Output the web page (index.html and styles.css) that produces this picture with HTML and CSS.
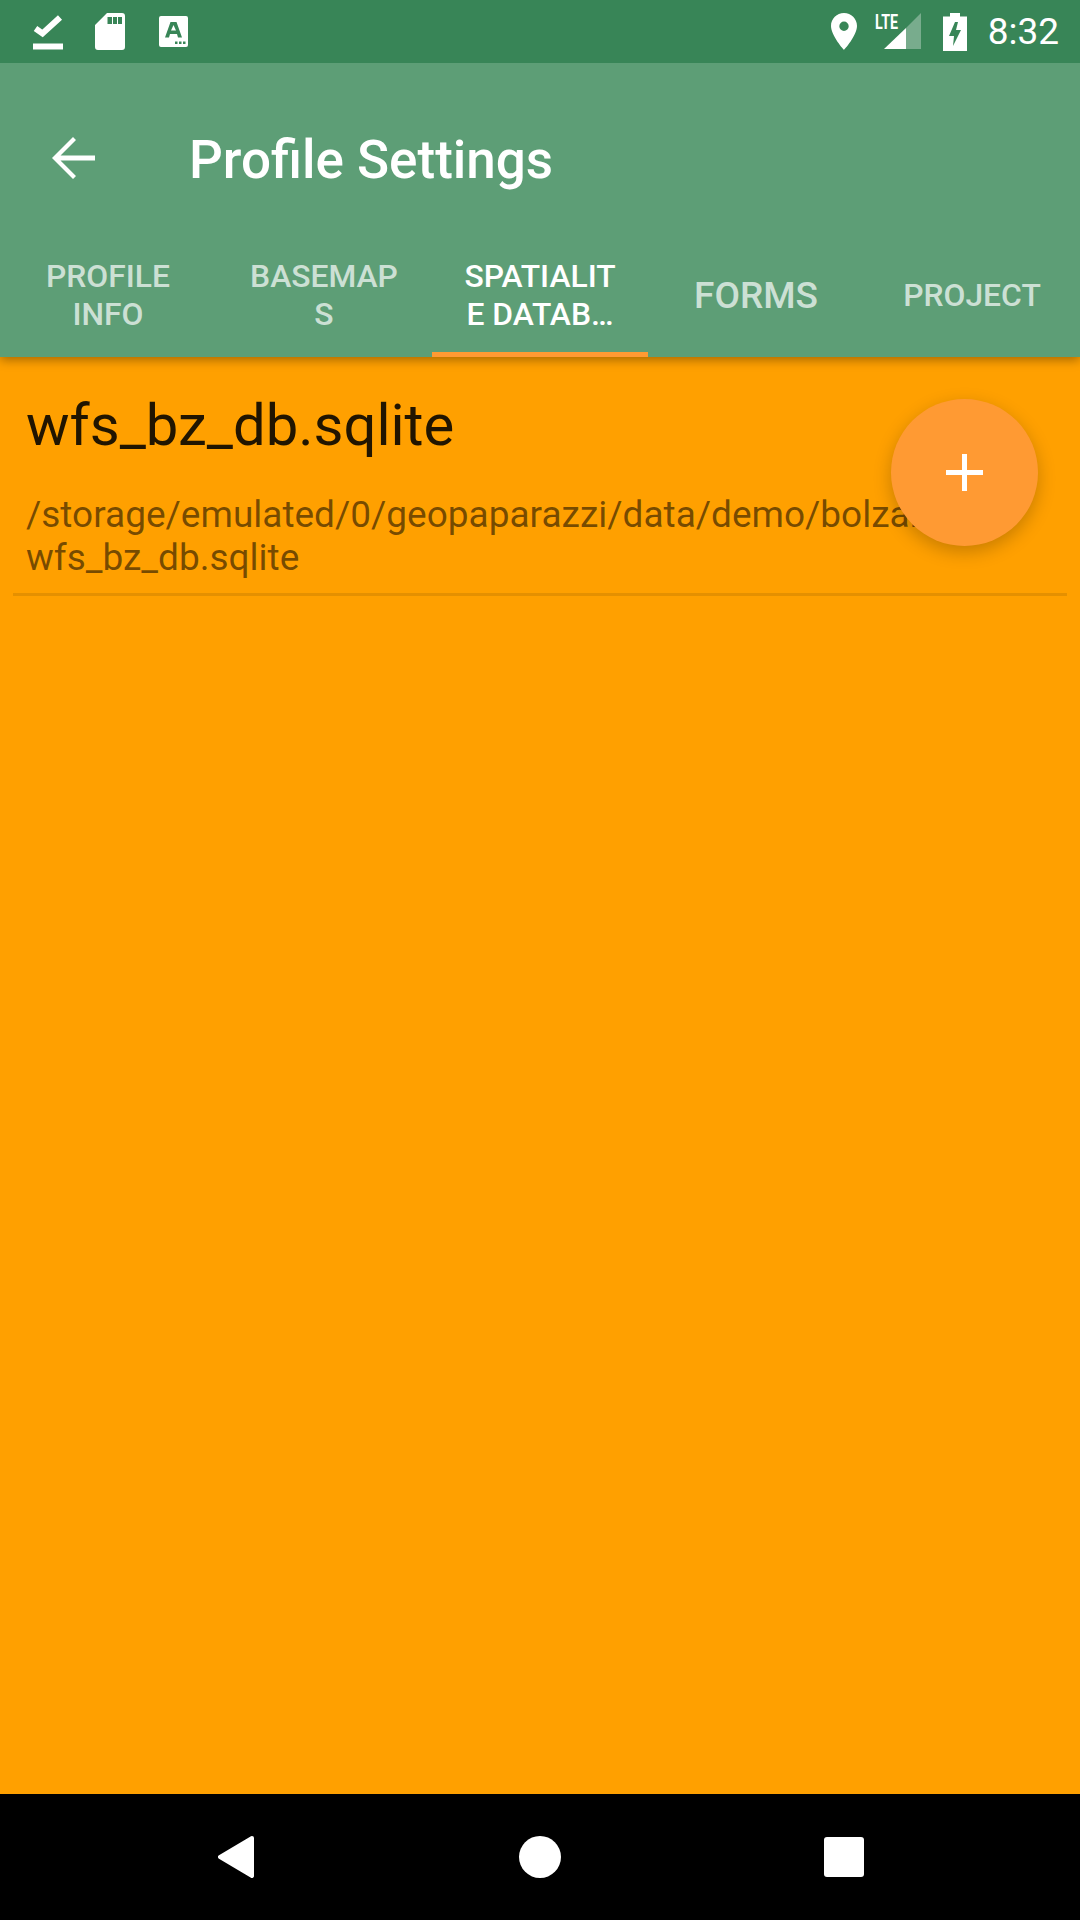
FILE: index.html
```html
<!DOCTYPE html>
<html lang="en">
<head>
<meta charset="utf-8">
<title>Profile Settings</title>
<link rel="stylesheet" href="styles.css">
</head>
<body>
<div class="screen">
  <header class="appbar">
    <div class="statusbar">
      <div class="status-left">
        <svg class="ic-done" viewBox="0 0 30 37"><path d="M0 30.500h30v6H0z" fill="#fff"/><path d="M2.500 15.500L9.500 20.500 27 4.500" fill="none" stroke="#fff" stroke-width="6"/></svg>
        <svg class="ic-sd" viewBox="0 0 30 37"><path fill-rule="evenodd" fill="#fff" d="M12 0h15a3 3 0 0 1 3 3v31a3 3 0 0 1-3 3H3a3 3 0 0 1-3-3V12zM12.500 4v7h4.500V4zM18 4v7h4V4zM23 4v7h4V4z"/></svg>
        <svg class="ic-a" viewBox="0 0 29 31"><path fill-rule="evenodd" fill="#fff" d="M2 0h25a2 2 0 0 1 2 2v27a2 2 0 0 1-2 2H2a2 2 0 0 1-2-2V2a2 2 0 0 1 2-2zM11.500 6L6 21.500h4l1-3.500h7l1 3.500h4L17.500 6zM12 14.500L14.500 9l2.500 5.500zM16 25.500h2.500V28H16zM20 25.500h2.500V28H20zM24 25.500h2.500V28H24z"/></svg>
      </div>
      <div class="status-right">
        <svg class="ic-pin" viewBox="0 0 26 37"><path fill-rule="evenodd" fill="#fff" d="M13 0C5.800 0 0 5.800 0 13c0 9.700 13 24 13 24s13-14.300 13-24C26 5.800 20.200 0 13 0zM13 8.500a4.700 4.700 0 1 1 0 9.400 4.700 4.700 0 0 1 0-9.400z"/></svg>
        <div class="signal">
          <span class="lte">LTE</span>
          <svg class="ic-signal" viewBox="0 0 37 37"><path d="M22 15L37 0v36H22z" fill="#fff" fill-opacity=".32"/><path d="M0 36L22 15v21z" fill="#fff"/></svg>
        </div>
        <svg class="ic-battery" viewBox="0 0 24 38"><path fill-rule="evenodd" fill="#fff" d="M7 0h10v3.500h7V38H0V3.500h7zM12 9L6 23h5L10 33l8-16h-5l2-8z"/></svg>
        <span class="clock">8:32</span>
      </div>
    </div>
    <div class="toolbar">
      <svg class="ic-back" viewBox="0 0 44 44"><path d="M44 19.500H9.500L25 4l-3-3L1 22l21 21 3-3L9.500 24.500H44z" fill="#fff"/></svg>
      <h1 class="title">Profile Settings</h1>
    </div>
    <nav class="tabs">
      <div class="tab tab-small">PROFILE<br>INFO</div>
      <div class="tab tab-small">BASEMAP<br>S</div>
      <div class="tab tab-small tab-active">SPATIALIT<br>E DATAB…</div>
      <div class="tab tab-large">FORMS</div>
      <div class="tab tab-small">PROJECT</div>
    </nav>
  </header>
  <main class="content">
    <article class="item">
      <h2 class="item-title">wfs_bz_db.sqlite</h2>
      <p class="item-path">/storage/emulated/0/geopaparazzi/data/demo/bolzano/<br>wfs_bz_db.sqlite</p>
    </article>
    <button class="fab" type="button" aria-label="Add">
      <svg class="ic-plus" viewBox="0 0 37 37"><path d="M16 0h5v16h16v5H21v16h-5V21H0v-5h16z" fill="#fff"/></svg>
    </button>
  </main>
  <footer class="navbar">
    <svg class="ic-nav-back" viewBox="0 0 36 42"><path d="M34 2L2 21l32 19z" fill="#fff" stroke="#fff" stroke-width="4" stroke-linejoin="round"/></svg>
    <span class="nav-home"></span>
    <span class="nav-recent"></span>
  </footer>
</div>
</body>
</html>
```
FILE: styles.css
```css
* { box-sizing: border-box; }
html, body { margin: 0; padding: 0; }
body { font-family: Roboto, sans-serif; background: #000; }
.screen { width: 1080px; height: 1920px; display: flex; flex-direction: column; overflow: hidden; }
.appbar { background: #5d9e76; color: #fff; box-shadow: 0 3px 10px rgba(0,0,0,.35); position: relative; z-index: 2; flex: none; }
.statusbar { height: 63px; background: #388557; display: flex; justify-content: space-between; align-items: center; padding: 0 21px 0 33px; }
.status-left, .status-right { display: flex; align-items: center; }
svg { display: block; flex: none; }
.ic-done { width: 30px; height: 37px; }
.ic-sd { width: 30px; height: 37px; margin-left: 32px; }
.ic-a { width: 29px; height: 31px; margin-left: 34px; }
.ic-pin { width: 26px; height: 37px; }
.signal { width: 47px; height: 37px; margin-left: 18px; position: relative; }
.ic-signal { width: 37px; height: 37px; margin-left: 9px; }
.lte { position: absolute; left: 0; top: 0; font-size: 21px; font-weight: 700; line-height: 18px; transform: scaleX(.68); transform-origin: left top; }
.ic-battery { width: 24px; height: 38px; margin-left: 21px; }
.clock { font-size: 37px; margin-left: 21px; line-height: 63px; }
.toolbar { height: 168px; padding: 26px 0 0 51px; display: flex; align-items: center; }
.ic-back { width: 44px; height: 44px; margin-bottom: 5px; }
.title { margin: 0 0 0 94px; font-size: 53px; font-weight: 500; line-height: 1; }
.tabs { height: 126px; display: grid; grid-template-columns: repeat(5, 216px); }
.tab { display: flex; align-items: center; justify-content: center; text-align: center; color: rgba(255,255,255,.7); font-weight: 500; padding-top: 2px; }
.tab-small { font-size: 31.800px; line-height: 38px; }
.tab-large { font-size: 37px; }
.tab-active { color: #fff; border-bottom: 5px solid #ff9a33; padding-top: 7px; }
.content { flex: 1; background: #ffa000; position: relative; padding: 0 13px; }
.item { border-bottom: 3px solid #e59000; height: 239px; padding: 34px 13px 0; }
.item-title { margin: 0; font-size: 58px; font-weight: 400; line-height: 68px; color: rgba(0,0,0,.87); }
.item-path { margin: 34px 0 0; font-size: 37px; line-height: 43px; color: rgba(0,0,0,.54); white-space: nowrap; }
.fab { position: absolute; left: 891px; top: 42px; width: 147px; height: 147px; border: 0; padding: 0; border-radius: 50%; background: #ff9a33; box-shadow: 0 6px 18px rgba(0,0,0,.22); display: flex; align-items: center; justify-content: center; }
.ic-plus { width: 37px; height: 37px; }
.navbar { height: 126px; flex: none; background: #000; display: flex; align-items: center; padding-left: 218px; }
.ic-nav-back { width: 36px; height: 42px; }
.nav-home { width: 42px; height: 42px; border-radius: 50%; background: #fff; margin-left: 265px; }
.nav-recent { width: 40px; height: 40px; border-radius: 3px; background: #fff; margin-left: 263px; }
```
